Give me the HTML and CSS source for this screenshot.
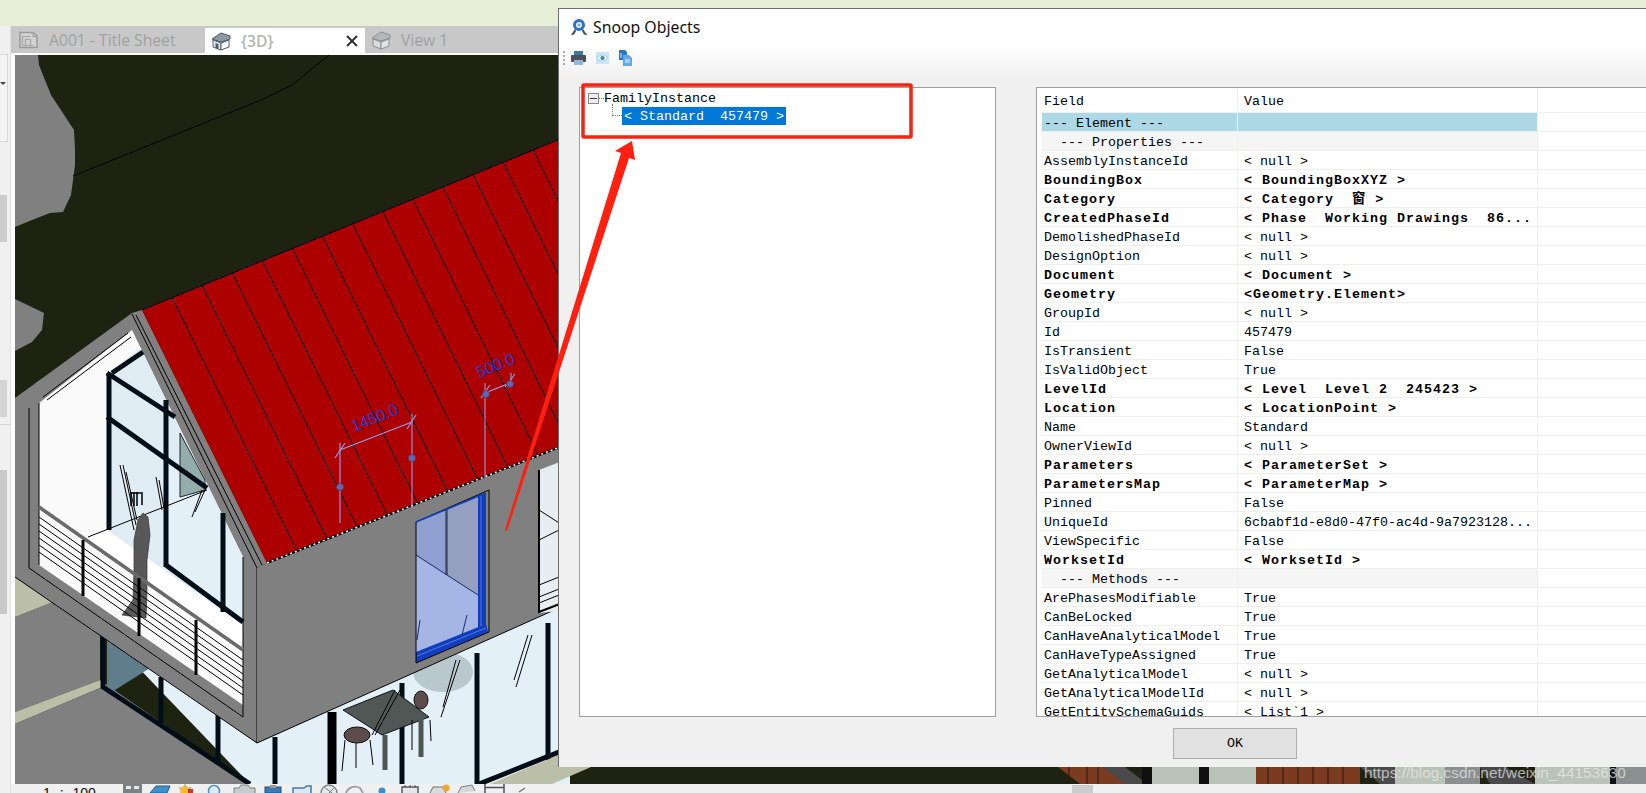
FILE: index.html
```html
<!DOCTYPE html>
<html lang="en">
<head>
<meta charset="utf-8">
<title>Snoop Objects</title>
<link rel="stylesheet" href="styles.css">
</head>
<body>
<div class="app">
  <div class="ribbon"></div>
  <div class="main">
    <aside class="sidebar">
      <div class="side-box"><span class="side-tri"></span></div>
      <div class="side-block b1"></div>
      <div class="side-block b2"></div>
      <div class="side-rule"></div>
      <div class="side-block b3"></div>
    </aside>
    <div class="work">
      <div class="tabs">
        <div class="tab t1">
          <svg class="tab-icon" width="21" height="18" viewBox="0 0 21 18"><path d="M1 1.5h13l4 3.5v11.5H1z" fill="#d2d2d2" stroke="#9a9a9a" stroke-width="1.5"/><path d="M14 1.5v4h4" fill="none" stroke="#9a9a9a"/><path d="M3.500 14.500v-9h8M6.500 14.500v-6h5v6M3.500 14.500h11" fill="none" stroke="#a6a6a6" stroke-width="1.200"/></svg>
          <span>A001 - Title Sheet</span>
        </div>
        <div class="tab t2">
          <svg class="tab-icon" width="20" height="20" viewBox="0 0 20 20"><path d="M1 8l9-6 9 3v3l-9 3z" fill="#8d9aa6" stroke="#4d5a66"/><path d="M2 9l8 3v7l-8-3z" fill="#e8ecf0" stroke="#4d5a66"/><path d="M10 12l8-3v7l-8 3z" fill="#fff" stroke="#4d5a66"/><path d="M4.500 17v-5l3 1v5z" fill="#4d5a66"/></svg>
          <span class="t2-label">{3D}</span>
          <svg class="tab-close" width="12" height="12" viewBox="0 0 12 12"><path d="M1 1l10 10M11 1L1 11" stroke="#2c2c2c" stroke-width="1.800" fill="none"/></svg>
        </div>
        <div class="tab t3">
          <svg class="tab-icon" width="20" height="20" viewBox="0 0 20 20"><path d="M1 8l9-6 9 3v3l-9 3z" fill="#b4b8bc" stroke="#8b9096"/><path d="M2 9l8 3v7l-8-3z" fill="#d8dadc" stroke="#8b9096"/><path d="M10 12l8-3v7l-8 3z" fill="#e0e2e4" stroke="#8b9096"/></svg>
          <span>View 1</span>
        </div>
      </div>
      <div class="view-frame">
        <svg class="scene" width="1631" height="729" viewBox="15 55 1631 729">
          <rect class="ground" x="15" y="55" width="1631" height="729"/>
          <polygon class="mass" points="15,55 38,55 39,65 51,95 74,130 75,150 75,165 71,195 63,212 50,213 32,220 15,227"/>
          <polygon class="mass" points="15,299 44,313 42,330 32,342 15,351"/>
          <polyline class="thin" points="329,55 292,85 261,100 73,176"/>

          <!-- lower storey -->
          <polygon class="glass" points="107,635 257,743 570,600 570,784 250,784"/>
          <polygon class="mass" points="15,617 53,602 100,633 100,680 15,712"/>
          <polygon class="beige" points="15,577 53,602 15,617"/>
          <polygon class="beige" points="15,712 100,680 107,685 15,724"/>
          <polygon class="mass" points="15,724 107,685 250,784 15,784"/>
          <polygon class="teal" points="107,640 150,668 107,695"/>
          <polyline class="bar" points="103,633 103,687 250,784"/>
          <line class="bar" x1="161" y1="677" x2="161" y2="723"/>
          <line class="bar" x1="218" y1="713" x2="218" y2="763"/>
          <line class="bar" x1="275" y1="737" x2="275" y2="784"/>
          <line class="bar wide" x1="332" y1="712" x2="332" y2="784"/>
          <line class="bar" x1="402" y1="683" x2="402" y2="784"/>
          <line class="bar" x1="477" y1="653" x2="477" y2="784"/>
          <line class="bar" x1="548" y1="623" x2="548" y2="760"/>
          <polygon class="beige" points="490,784 552,784 591,767 570,750"/>
          <line class="bar" x1="479" y1="784" x2="559" y2="752"/>
          <ellipse class="shade" cx="443" cy="672" rx="30" ry="20"/>
          <polygon class="table" points="343,710 393,690 429,717 382,735"/>
          <line class="table-leg" x1="385" y1="735" x2="385" y2="770"/>
          <line class="table-leg" x1="421" y1="717" x2="421" y2="757"/>
          <ellipse class="chair" cx="357" cy="735" rx="13" ry="8"/>
          <ellipse class="chair" cx="421" cy="700" rx="7" ry="9"/>
          <line class="thin" x1="345" y1="740" x2="342" y2="771"/>
          <line class="thin" x1="356" y1="743" x2="356" y2="768"/>
          <line class="thin" x1="370" y1="740" x2="373" y2="765"/>
          <line class="thin" x1="412" y1="720" x2="412" y2="750"/>
          <line class="thin" x1="430" y1="720" x2="431" y2="741"/>
          <line class="thin" x1="460" y1="660" x2="441" y2="717"/>
          <line class="thin" x1="456" y1="660" x2="443" y2="707"/>
          <line class="thin" x1="532" y1="635" x2="516" y2="687"/>
          <line class="thin" x1="528" y1="635" x2="514" y2="680"/>
          <line class="thin" x1="400" y1="690" x2="375" y2="735"/>
          <line class="thin" x1="395" y1="690" x2="372" y2="735"/>

          <!-- gable frame -->
          <polygon class="mass" points="132,313 142,310 267,563 257,568 257,743 15,577 15,398"/>
          <polygon class="opening" points="132,330 243,557 243,705 39,565 39,403"/>
          <polygon class="glass-up" points="107,374 140,348 243,557 243,640 107,530"/>
          <polygon class="glass" points="166,460 207,488 243,557 243,625 166,565"/>
          <polygon class="floor" points="88,537 107,530 243,625 243,660 180,620"/>
          <polygon class="teal-light" points="180,433 205,480 205,490 180,497"/>
          <line class="bar" x1="109" y1="373" x2="109" y2="530"/>
          <line class="bar" x1="166" y1="400" x2="166" y2="567"/>
          <line class="bar" x1="223" y1="513" x2="223" y2="612"/>
          <line class="bar" x1="107" y1="373" x2="175" y2="417"/>
          <line class="bar" x1="112" y1="373" x2="143" y2="352"/>
          <line class="bar" x1="107" y1="417" x2="207" y2="488"/>
          <line class="bar" x1="166" y1="565" x2="243" y2="622"/>
          <line class="thin" x1="43" y1="397" x2="128" y2="333"/>
          <line class="thin" x1="47" y1="400" x2="131" y2="337"/>
          <line class="thin" x1="88" y1="537" x2="207" y2="490"/>
          <line class="thin" x1="136" y1="315" x2="262" y2="565"/>
          <line class="thin" x1="132" y1="314" x2="257" y2="568"/>
          <line class="thin" x1="39" y1="403" x2="39" y2="565"/>
          <line class="thin" x1="29" y1="408" x2="29" y2="568"/>
          <line class="thin" x1="29" y1="568" x2="243" y2="717"/>
          <line class="thin" x1="243" y1="557" x2="243" y2="717"/>
          <line class="thin" x1="15" y1="577" x2="257" y2="743"/>
          <line class="thin" x1="257" y1="568" x2="257" y2="743"/>

          <!-- balcony -->
          <line class="thin" x1="120" y1="465" x2="134" y2="530"/>
          <line class="thin" x1="123" y1="465" x2="136" y2="525"/>
          <line class="thin" x1="126" y1="472" x2="137" y2="520"/>
          <line class="thin" x1="156" y1="477" x2="162" y2="510"/>
          <line class="thin" x1="159" y1="480" x2="164" y2="508"/>
          <line class="thin" x1="202" y1="490" x2="192" y2="517"/>
          <line class="thin" x1="205" y1="490" x2="195" y2="512"/>
          <g class="flag">
            <line x1="131" y1="492" x2="131" y2="506"/><line x1="134" y1="492" x2="134" y2="506"/><line x1="137" y1="492" x2="137" y2="506"/><line x1="131" y1="493" x2="143" y2="493"/><line x1="142" y1="494" x2="142" y2="505"/>
          </g>
          <polygon class="person" points="143,513 148,517 150,535 147,560 147,590 146,618 122,615 133,600 134,570 134,540 138,520"/>
          <line class="thin" x1="39" y1="517" x2="243" y2="660"/>
          <line class="thin" x1="39" y1="524" x2="243" y2="667"/>
          <line class="thin" x1="39" y1="531" x2="243" y2="674"/>
          <line class="thin" x1="39" y1="538" x2="243" y2="681"/>
          <line class="thin" x1="39" y1="545" x2="243" y2="688"/>
          <line class="thin" x1="39" y1="552" x2="243" y2="695"/>
          <line class="rail" x1="39" y1="507" x2="243" y2="650"/>
          <line class="post" x1="83" y1="540" x2="83" y2="596"/>
          <line class="post" x1="139" y1="578" x2="139" y2="636"/>
          <line class="post" x1="196" y1="620" x2="196" y2="675"/>

          <!-- roof -->
          <polygon class="roof" points="142,310 570,135 570,443 267,563"/>
          <g class="roof-lines">
            <line x1="172.100" y1="297.700" x2="297.100" y2="551"/>
            <line x1="202.200" y1="285.400" x2="327.200" y2="539"/>
            <line x1="232.300" y1="273.100" x2="357.300" y2="527"/>
            <line x1="262.400" y1="260.800" x2="387.400" y2="515"/>
            <line x1="292.500" y1="248.500" x2="417.500" y2="503"/>
            <line x1="322.600" y1="236.200" x2="447.600" y2="491"/>
            <line x1="352.700" y1="223.900" x2="477.700" y2="479"/>
            <line x1="382.800" y1="211.600" x2="507.800" y2="467"/>
            <line x1="412.900" y1="199.300" x2="537.900" y2="455"/>
            <line x1="443" y1="187" x2="568" y2="443"/>
            <line x1="473.100" y1="174.700" x2="570" y2="372"/>
            <line x1="503.200" y1="162.400" x2="570" y2="298"/>
            <line x1="533.300" y1="150.100" x2="570" y2="225"/>
            <line x1="142" y1="310" x2="570" y2="135"/>
          </g>

          <!-- wall -->
          <polygon class="mass" points="257,568 267,563 570,443 570,603 257,743"/>
          <line class="eave-base" x1="267" y1="563" x2="570" y2="443"/>
          <line class="eave-dash" x1="267" y1="563" x2="570" y2="443"/>
          <line class="thin" x1="257" y1="743" x2="570" y2="603"/>

          <!-- window in wall -->
          <polygon class="win-floor" points="416,522 486,493 486,632 416,663"/>
          <polygon class="win-left" points="416,522 445,510 445,574 416,555"/>
          <polygon class="win-right" points="448,509 478,497 478,595 448,576"/>
          <line class="win-post" x1="446.500" y1="509" x2="446.500" y2="575"/>
          <line class="win-line" x1="416" y1="555" x2="478" y2="595"/>
          <polygon class="win-blue" points="478,496 486,493 486,625 478,628"/>
          <polygon class="win-blue" points="416,652 486,624 488,632 416,663"/>
          <line class="win-band" x1="417" y1="656" x2="486" y2="628"/>
          <line class="win-band" x1="481" y1="496" x2="481" y2="626"/>
          <polygon class="win-outline" points="416,522 489,490 489,632 416,663"/>
          <line class="win-top" x1="416" y1="522" x2="486" y2="493"/>
          <line class="win-line" x1="417" y1="640" x2="420" y2="620"/>
          <line class="win-line" x1="462" y1="635" x2="467" y2="615"/>

          <!-- second window -->
          <polygon class="win2" points="539,470 570,458 570,610 539,613"/>
          <polyline class="win2-line" points="539,470 539,612 570,600"/>
          <polyline class="thin" points="539,510 570,530"/>
          <polyline class="thin" points="539,540 559,530"/>
          <polyline class="thin" points="539,585 559,577"/>
          <polyline class="thin" points="539,597 559,589"/>
          <polyline class="thin" points="539,603 559,595"/>

          <!-- dimensions -->
          <line class="witness-strong" x1="340" y1="443" x2="340" y2="523"/>
          <line class="witness" x1="412" y1="414" x2="412" y2="508"/>
          <line class="witness" x1="485" y1="383" x2="485" y2="478"/>
          <line class="witness" x1="511" y1="373" x2="511" y2="383"/>
          <line class="dim" x1="340" y1="450" x2="412" y2="422"/>
          <line class="dim" x1="335" y1="458" x2="345" y2="443"/>
          <line class="dim" x1="407" y1="429" x2="416" y2="415"/>
          <line class="dim" x1="485" y1="393" x2="510" y2="383"/>
          <line class="dim" x1="481" y1="398" x2="490" y2="385"/>
          <line class="dim" x1="505" y1="387" x2="515" y2="374"/>
          <circle class="grip" cx="340" cy="487" r="3.500"/>
          <circle class="grip" cx="412" cy="458" r="3.500"/>
          <circle class="grip" cx="486" cy="394" r="3.500"/>
          <circle class="grip" cx="510" cy="384" r="3.500"/>
          <text class="dim-text" transform="translate(354 432) rotate(-22)">1450.0</text>
          <text class="dim-text" transform="translate(479 378) rotate(-22)">500.0</text>

          <!-- strip below the dialog -->
          <polygon class="brown" points="1058,767 1103,767 1142,784 1080,784"/>
          <polygon class="hatch" points="1103,767 1125,767 1142,780 1142,784 1125,784"/>
          <rect class="strip-black" x="1142" y="767" width="10" height="17"/>
          <rect class="strip-grey" x="1152" y="767" width="47" height="17"/>
          <rect class="strip-black" x="1199" y="767" width="10" height="17"/>
          <rect class="strip-grey" x="1209" y="767" width="47" height="17"/>
          <rect class="brown" x="1256" y="767" width="104" height="17"/>
          <g class="strip-ticks">
            <line x1="1069" y1="767" x2="1069" y2="778"/><line x1="1087" y1="767" x2="1087" y2="784"/><line x1="1098" y1="767" x2="1098" y2="784"/>
            <line x1="1268" y1="767" x2="1268" y2="784"/><line x1="1283" y1="767" x2="1283" y2="784"/><line x1="1298" y1="767" x2="1298" y2="784"/><line x1="1313" y1="767" x2="1313" y2="784"/><line x1="1328" y1="767" x2="1328" y2="784"/><line x1="1343" y1="767" x2="1343" y2="784"/>
          </g>
          <polygon class="hatch" points="1360,767 1395,767 1420,784 1380,784"/>
          <rect class="strip-grey" x="1395" y="767" width="50" height="17"/>
          <rect class="strip-dim" x="1445" y="767" width="35" height="17"/>
          <polygon class="hatch" points="1480,767 1505,767 1535,784 1490,784"/>
          <rect class="strip-grey" x="1535" y="767" width="75" height="17"/>
          <rect class="strip-black" x="1610" y="767" width="6" height="17"/>
          <rect class="strip-dim" x="1616" y="767" width="30" height="17"/>
        </svg>
      </div>
      <div class="status">
        <span class="scale">1 : 100</span>
        <svg class="status-icons" width="420" height="9" viewBox="0 0 420 9">
          <rect x="1" y="0" width="19" height="9" fill="#7c8186"/><rect x="4" y="2" width="5" height="3" fill="#e8e8e8"/><rect x="12" y="2" width="5" height="3" fill="#e8e8e8"/>
          <path d="M28 9l6-7h14l-3 7z" fill="#3f8fc9" stroke="#24628f"/>
          <circle cx="63" cy="7" r="5" fill="#f5b93a"/><path d="M63 0v3M57 3l2 2M69 3l-2 2" stroke="#e08a1e"/><rect x="66" y="5" width="5" height="4" fill="#cc3a2c"/>
          <circle cx="92" cy="7" r="5.500" fill="#dcebf7" stroke="#4c8fc4" stroke-width="1.500"/>
          <path d="M112 9V4h5l2-3h7l2 3h5v5" fill="#c8ccd0" stroke="#7a8086"/>
          <rect x="143" y="3" width="16" height="6" fill="#3c7bb5" stroke="#1f4f7e"/><rect x="148" y="1" width="6" height="3" fill="#9a9a9a"/>
          <path d="M171 9V4h11l3-2h4v7" fill="#dfe8f0" stroke="#3c7bb5" stroke-width="1.500"/>
          <circle cx="207" cy="9" r="8" fill="#e4e8ea" stroke="#767b80" stroke-width="1.300"/><path d="M202 3l8 6M212 4l-5 5" stroke="#767b80"/>
          <path d="M224 9c2-6 9-8 14-5l3 5" fill="none" stroke="#9a9ea2" stroke-width="1.800"/>
          <circle cx="260" cy="7" r="3.500" fill="#3f8fc9"/>
          <path d="M280 9V3h16v6" fill="#e6e6e6" stroke="#55585c" stroke-width="1.500"/><path d="M283 1v3M288 1v3M293 1v3" stroke="#55585c"/>
          <path d="M308 9l3-6h10l3 6" fill="#d9dcdf" stroke="#6c7074"/><circle cx="324" cy="4" r="3.500" fill="#f0a52e"/>
          <path d="M336 9l3-6 11-2 3 6" fill="#d4d6d8" stroke="#7d8185"/>
          <path d="M363 0v9M382 0v9M363 3.500h19" stroke="#4d5155" stroke-width="1.500" fill="none"/>
          <path d="M397 8l6-4" stroke="#66696c" stroke-width="1.200"/>
        </svg>
        <span class="thumb"></span>
      </div>
    </div>
  </div>

  <section class="dialog">
    <header class="dlg-title">
      <svg class="medal" width="18" height="18" viewBox="0 0 18 18"><path d="M5 11L1 17l3-.5L6 13zM13 11l4 6-3-.5L12 13z" fill="#3d4a57"/><circle cx="9" cy="7" r="6" fill="#2f72c4"/><circle cx="9" cy="7" r="3" fill="#e8f1fb"/><circle cx="9" cy="7" r="1.500" fill="#7aa9dd"/></svg>
      <span>Snoop Objects</span>
    </header>
    <div class="dlg-tools">
      <span class="grip-dots"></span>
      <svg class="tool-print" width="15" height="14" viewBox="0 0 15 14"><rect x="3" y="0" width="9" height="4" fill="#3a77ad"/><rect x="0" y="4" width="15" height="7" rx="1" fill="#4a5159"/><rect x="3" y="9" width="9" height="5" fill="#8fb8dc"/></svg>
      <svg class="tool-eye" width="13" height="12" viewBox="0 0 13 12"><rect width="13" height="12" fill="#cce4f7"/><path d="M1 6c3-4 8-4 11 0-3 4-8 4-11 0z" fill="#e5f2fb" stroke="#9cc3e0" stroke-width=".7"/><circle cx="6.500" cy="6" r="2" fill="#2c8f9a"/></svg>
      <svg class="tool-doc" width="13" height="16" viewBox="0 0 13 16"><path d="M0 0h6l2 2v8H0z" fill="#2376c9"/><path d="M4 5h6l3 3v8H4z" fill="#62a8e6"/><path d="M6 10h5M6 12h5M2 3v5" stroke="#e6f2fc"/></svg>
    </div>
    <div class="dlg-body">
      <div class="tree">
        <div class="tree-root">
          <span class="tree-box"><span class="tree-minus"></span></span><span class="tree-dash"></span><span class="tree-text">FamilyInstance</span>
        </div>
        <div class="tree-child">
          <span class="tree-elbow"></span><span class="tree-sel">&lt; Standard  457479 &gt;</span>
        </div>
      </div>
      <div class="grid">
        <div class="row head"><span class="c-f">Field</span><span class="c-v">Value</span><span class="c-x"></span></div>
        <div class="row sec"><span class="c-f">--- Element ---</span><span class="c-v"></span><span class="c-x"></span></div>
        <div class="row sub"><span class="c-f">  --- Properties ---</span><span class="c-v"></span><span class="c-x"></span></div>
        <div class="row"><span class="c-f">AssemblyInstanceId</span><span class="c-v">&lt; null &gt;</span><span class="c-x"></span></div>
        <div class="row strong"><span class="c-f">BoundingBox</span><span class="c-v">&lt; BoundingBoxXYZ &gt;</span><span class="c-x"></span></div>
        <div class="row strong"><span class="c-f">Category</span><span class="c-v">&lt; Category  窗 &gt;</span><span class="c-x"></span></div>
        <div class="row strong"><span class="c-f">CreatedPhaseId</span><span class="c-v">&lt; Phase  Working Drawings  86...</span><span class="c-x"></span></div>
        <div class="row"><span class="c-f">DemolishedPhaseId</span><span class="c-v">&lt; null &gt;</span><span class="c-x"></span></div>
        <div class="row"><span class="c-f">DesignOption</span><span class="c-v">&lt; null &gt;</span><span class="c-x"></span></div>
        <div class="row strong"><span class="c-f">Document</span><span class="c-v">&lt; Document &gt;</span><span class="c-x"></span></div>
        <div class="row strong"><span class="c-f">Geometry</span><span class="c-v">&lt;Geometry.Element&gt;</span><span class="c-x"></span></div>
        <div class="row"><span class="c-f">GroupId</span><span class="c-v">&lt; null &gt;</span><span class="c-x"></span></div>
        <div class="row"><span class="c-f">Id</span><span class="c-v">457479</span><span class="c-x"></span></div>
        <div class="row"><span class="c-f">IsTransient</span><span class="c-v">False</span><span class="c-x"></span></div>
        <div class="row"><span class="c-f">IsValidObject</span><span class="c-v">True</span><span class="c-x"></span></div>
        <div class="row strong"><span class="c-f">LevelId</span><span class="c-v">&lt; Level  Level 2  245423 &gt;</span><span class="c-x"></span></div>
        <div class="row strong"><span class="c-f">Location</span><span class="c-v">&lt; LocationPoint &gt;</span><span class="c-x"></span></div>
        <div class="row"><span class="c-f">Name</span><span class="c-v">Standard</span><span class="c-x"></span></div>
        <div class="row"><span class="c-f">OwnerViewId</span><span class="c-v">&lt; null &gt;</span><span class="c-x"></span></div>
        <div class="row strong"><span class="c-f">Parameters</span><span class="c-v">&lt; ParameterSet &gt;</span><span class="c-x"></span></div>
        <div class="row strong"><span class="c-f">ParametersMap</span><span class="c-v">&lt; ParameterMap &gt;</span><span class="c-x"></span></div>
        <div class="row"><span class="c-f">Pinned</span><span class="c-v">False</span><span class="c-x"></span></div>
        <div class="row"><span class="c-f">UniqueId</span><span class="c-v">6cbabf1d-e8d0-47f0-ac4d-9a7923128...</span><span class="c-x"></span></div>
        <div class="row"><span class="c-f">ViewSpecific</span><span class="c-v">False</span><span class="c-x"></span></div>
        <div class="row strong"><span class="c-f">WorksetId</span><span class="c-v">&lt; WorksetId &gt;</span><span class="c-x"></span></div>
        <div class="row sub"><span class="c-f">  --- Methods ---</span><span class="c-v"></span><span class="c-x"></span></div>
        <div class="row"><span class="c-f">ArePhasesModifiable</span><span class="c-v">True</span><span class="c-x"></span></div>
        <div class="row"><span class="c-f">CanBeLocked</span><span class="c-v">True</span><span class="c-x"></span></div>
        <div class="row"><span class="c-f">CanHaveAnalyticalModel</span><span class="c-v">True</span><span class="c-x"></span></div>
        <div class="row"><span class="c-f">CanHaveTypeAssigned</span><span class="c-v">True</span><span class="c-x"></span></div>
        <div class="row"><span class="c-f">GetAnalyticalModel</span><span class="c-v">&lt; null &gt;</span><span class="c-x"></span></div>
        <div class="row"><span class="c-f">GetAnalyticalModelId</span><span class="c-v">&lt; null &gt;</span><span class="c-x"></span></div>
        <div class="row"><span class="c-f">GetEntitySchemaGuids</span><span class="c-v">&lt; List`1 &gt;</span><span class="c-x"></span></div>
      </div>
    </div>
    <footer class="dlg-foot"><button class="ok" type="button">OK</button></footer>
  </section>

  <svg class="annot" width="1646" height="793" viewBox="0 0 1646 793">
    <rect class="annot-box" x="583" y="85" width="328" height="52" rx="1"/>
    <polygon class="annot-arrow" points="632,141 635,160 629,158 507,531 505,530 621,153 615,151"/>
  </svg>
  <div class="watermark">https://blog.csdn.net/weixin_44153630</div>
</div>
</body>
</html>
```
FILE: styles.css
```css
* { box-sizing: border-box; }
html, body { margin: 0; padding: 0; }
body { width: 1646px; height: 793px; overflow: hidden; background: #f0f0f0; }

.app { position: relative; width: 1646px; height: 793px; display: flex; flex-direction: column; overflow: hidden; }
.ribbon { height: 26px; background: #e6efd6; flex: none; }
.main { flex: 1; display: flex; min-height: 0; }

/* left panel */
.sidebar { width: 11px; flex: none; background: #f0f0f0; position: relative; border-right: 1px solid #e0e0e0; display: flex; flex-direction: column; }
.side-box { margin-top: 28px; height: 88px; width: 8px; background: #f4f4f4; border: 1px solid #d8d8d8; border-left: 0; position: relative; }
.side-tri { position: absolute; left: 0; top: 27px; width: 0; height: 0; border-left: 3px solid transparent; border-right: 3px solid transparent; border-top: 3px solid #444; }
.side-block { width: 7px; background: #cccccc; }
.b1 { margin-top: 53px; height: 47px; }
.b2 { margin-top: 138px; height: 37px; background: #d4d4d4; }
.side-rule { margin-top: 7px; height: 1px; background: #d6d6d6; }
.b3 { margin-top: 45px; height: 144px; background: #c9c9c9; }

/* tabs */
.work { flex: 1; min-width: 0; display: flex; flex-direction: column; }
.tabs { height: 27px; flex: none; display: flex; background: #c8c8c8; font: 15.700px "Open Sans", "Liberation Sans", sans-serif; color: #a0a0a0; }
.tab { display: flex; align-items: center; flex: none; }
.t1 { width: 194px; padding-left: 8px; }
.t1 .tab-icon { margin-right: 9px; }
.t2 { width: 160px; margin-top: 2px; padding-left: 6px; background: #ffffff; color: #b4b4b4; }
.t2 .tab-icon { margin-right: 10px; }
.t2-label { flex: 1; font-weight: 600; }
.tab-close { margin-right: 7px; }
.t3 { padding-left: 6px; }
.t3 .tab-icon { margin-right: 10px; }

/* drawing */
.view-frame { flex: 1; min-height: 0; background: #ffffff; padding: 2px 0 0 4px; }
.scene { display: block; }
.ground { fill: #1e2311; }
.mass { fill: #808080; }
.thin { fill: none; stroke: #000; stroke-width: 1; }
.glass { fill: #e4f0f8; }
.glass-up { fill: #e0ecf3; }
.beige { fill: #bcbfa8; }
.teal { fill: #5f7d8a; }
.teal-light { fill: #93aeaa; stroke: #223; }
.bar { stroke: #000f17; stroke-width: 5; fill: none; }
.bar.wide { stroke-width: 9; stroke: #000; }
.shade { fill: #b8c8cc; }
.table { fill: #4f5855; stroke: #111; }
.table-leg { stroke: #4c5654; stroke-width: 5; }
.chair { fill: #5d4c4a; stroke: #111; }
.opening { fill: #fafafa; }
.floor { fill: #ffffff; }
.flag line { stroke: #000; stroke-width: 1.500; }
.person { fill: #585858; stroke: #333; stroke-width: .7; }
.rail { stroke: #6a6a6a; stroke-width: 3.500; }
.post { stroke: #000; stroke-width: 3; }
.roof { fill: #ad0000; }
.roof-lines line { stroke: #000; stroke-width: 1; }
.eave-base { stroke: #000; stroke-width: 2; }
.eave-dash { stroke: #fff; stroke-width: 1.500; stroke-dasharray: 2 3; }
.win-floor { fill: #a4b5e6; }
.win-left { fill: #8f9fd0; }
.win-right { fill: #959fc0; }
.win-post { stroke: #3b4868; stroke-width: 2.500; }
.win-line { stroke: #1c2b6e; stroke-width: 1; }
.win-blue { fill: #0f3fc0; }
.win-band { stroke: #5a78d8; stroke-width: 1; }
.win-outline { fill: none; stroke: #000; stroke-width: 1; }
.win-top { stroke: #0f3fc0; stroke-width: 1.500; }
.win2 { fill: #e6eef2; }
.win2-line { fill: none; stroke: #000; stroke-width: 2; }
.witness { stroke: #9aa8ec; stroke-width: 1; }
.witness-strong { stroke: #a0588a; stroke-width: 2; }
.dim { stroke: #8ea0e8; stroke-width: 1.200; }
.grip { fill: #5a68c0; stroke: #6b3a55; stroke-width: 1; }
.dim-text { font: 16px "Liberation Sans", sans-serif; fill: #1a3cd8; }
.brown { fill: #7a3b20; }
.hatch { fill: #4a4a4a; }
.strip-black { fill: #101010; }
.strip-grey { fill: #b9c3b7; }
.strip-dim { fill: #8a8f90; }
.strip-ticks line { stroke: #2e1608; stroke-width: 1; }

/* status bar */
.status { height: 9px; flex: none; display: flex; background: #f0f0f0; overflow: hidden; }
.scale { margin-left: 32px; width: 79px; font: 14px/18px "Liberation Sans", sans-serif; color: #111; white-space: pre; word-spacing: 5px; }
.status-icons { flex: none; }
.thumb { margin-left: 530px; width: 21px; height: 8px; margin-top: 1px; background: #cccccc; }

/* dialog */
.dialog { position: absolute; left: 558px; top: 8px; right: 0; height: 759px; background: #f0f0f0; border-top: 1px solid #6e6e6e; border-left: 1px solid #6e6e6e; display: flex; flex-direction: column; }
.dlg-title { height: 36px; flex: none; background: #ffffff; display: flex; align-items: center; padding-left: 11px; gap: 5px; font: 15.800px "Noto Sans", "Liberation Sans", sans-serif; color: #111; }
.dlg-tools { height: 33px; flex: none; background: linear-gradient(#ffffff, #f0f0f0); display: flex; align-items: center; padding-left: 4px; padding-bottom: 8px; }
.grip-dots { width: 2px; height: 14px; margin-right: 6px; background: repeating-linear-gradient(#a8a8a8 0 2px, transparent 2px 4px); }
.tool-print { margin-right: 10px; }
.tool-eye { margin-right: 10px; }
.dlg-body { height: 630px; flex: none; margin-top: 9px; display: flex; align-items: stretch; font: 13.333px/18px "Liberation Mono", "Noto Sans CJK SC", monospace; color: #000; }

.tree { width: 417px; margin-left: 20px; flex: none; background: #ffffff; border: 1px solid #a0a0a0; padding-top: 1px; }
.tree-root { height: 18px; display: flex; align-items: center; padding-left: 8px; }
.tree-box { width: 11px; height: 11px; background: #eeeeee; border: 1px solid #8a8a8a; display: flex; align-items: center; justify-content: center; flex: none; }
.tree-minus { width: 7px; height: 1px; background: #2c3f7c; }
.tree-dash { width: 5px; border-top: 1px dotted #777; flex: none; }
.tree-text { white-space: pre; padding-top: 2px; }
.tree-child { height: 18px; display: flex; padding-left: 32px; }
.tree-elbow { width: 10px; height: 12px; margin-top: -3px; border-left: 1px dotted #777; border-bottom: 1px dotted #777; flex: none; }
.tree-sel { background: #0078d7; color: #ffffff; white-space: pre; padding: 0 2px; height: 18px; line-height: 20px; }

.grid { flex: 1; min-width: 0; margin-left: 40px; background: #ffffff; border: 1px solid #a0a0a0; border-right: 0; overflow: hidden; }
.row { display: flex; height: 19px; margin-left: 5px; white-space: pre; border-bottom: 1px solid #efefef; line-height: 21px; }
.row.head { height: 25px; align-items: center; }
.c-f { width: 196px; flex: none; padding-left: 2px; border-right: 1px solid #efefef; align-self: stretch; overflow: hidden; }
.c-v { width: 300px; flex: none; padding-left: 6px; border-right: 1px solid #efefef; align-self: stretch; overflow: hidden; }
.c-x { flex: 1; }
.row.head .c-f, .row.head .c-v { line-height: 27px; }
.row.sec .c-f, .row.sec .c-v { background: #add8e6; }
.row.sub .c-f, .row.sub .c-v { background: #f5f5f5; }
.row.strong { font-weight: 700; letter-spacing: 1px; }

.dlg-foot { flex: 1; padding: 11px 0 0 614px; }
.ok { display: block; width: 124px; height: 31px; background: #e1e1e1; border: 1px solid #adadad; font: 13.333px "Liberation Mono", monospace; color: #000; padding: 0; }

/* annotation on top of the screenshot */
.annot { position: absolute; left: 0; top: 0; pointer-events: none; }
.annot-box { fill: none; stroke: #ff2010; stroke-width: 3.500; }
.annot-arrow { fill: #ff2010; }
.watermark { position: absolute; left: 1364px; top: 763px; font: 15.400px/20px "Liberation Sans", sans-serif; color: rgba(235, 235, 235, .72); white-space: nowrap; }
```
